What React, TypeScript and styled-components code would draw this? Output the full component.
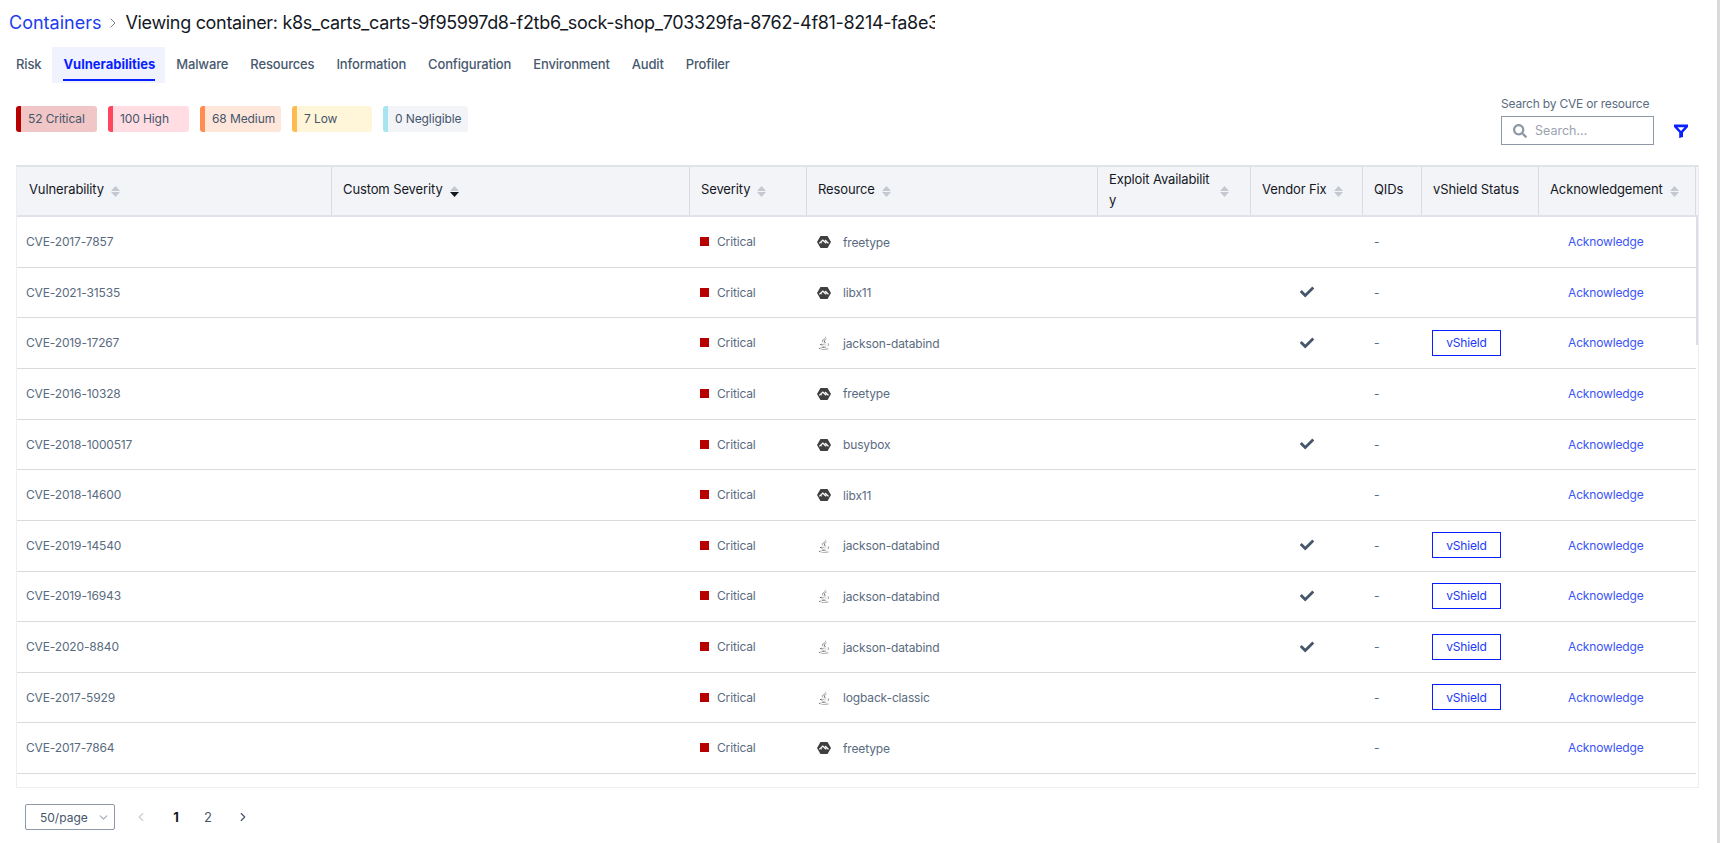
import React from "react";
import styled, { createGlobalStyle } from "styled-components";
import { SiAlpinelinux } from "react-icons/si";
import { FaJava, FaSearch, FaCheck } from "react-icons/fa";
import { LuChevronRight, LuChevronLeft, LuChevronDown } from "react-icons/lu";

const GlobalStyle = createGlobalStyle`
  html, body {
    margin: 0;
    height: 100%;
    overflow: hidden;
    background: #fff;
    font-family: Inter, "Noto Sans", sans-serif;
  }
`;

const COLUMNS = "315px 358px 117px 291px 153px 112px 59px 117px 157px";

type Row = {
  cve: string;
  resource: string;
  kind: "alpine" | "java";
  fix?: boolean;
  shield?: boolean;
};

const rows: Row[] = [
  { cve: "CVE-2017-7857", resource: "freetype", kind: "alpine" },
  { cve: "CVE-2021-31535", resource: "libx11", kind: "alpine", fix: true },
  { cve: "CVE-2019-17267", resource: "jackson-databind", kind: "java", fix: true, shield: true },
  { cve: "CVE-2016-10328", resource: "freetype", kind: "alpine" },
  { cve: "CVE-2018-1000517", resource: "busybox", kind: "alpine", fix: true },
  { cve: "CVE-2018-14600", resource: "libx11", kind: "alpine" },
  { cve: "CVE-2019-14540", resource: "jackson-databind", kind: "java", fix: true, shield: true },
  { cve: "CVE-2019-16943", resource: "jackson-databind", kind: "java", fix: true, shield: true },
  { cve: "CVE-2020-8840", resource: "jackson-databind", kind: "java", fix: true, shield: true },
  { cve: "CVE-2017-5929", resource: "logback-classic", kind: "java", shield: true },
  { cve: "CVE-2017-7864", resource: "freetype", kind: "alpine" },
];

const tabs = [
  "Risk",
  "Vulnerabilities",
  "Malware",
  "Resources",
  "Information",
  "Configuration",
  "Environment",
  "Audit",
  "Profiler",
];

const chips = [
  { label: "52 Critical", bar: "#b80000", bg: "#f0c6c6", width: 81 },
  { label: "100 High", bar: "#ff4560", bg: "#ffdde2", width: 81 },
  { label: "68 Medium", bar: "#ff8c50", bg: "#ffe6da", width: 81 },
  { label: "7 Low", bar: "#ffbb50", bg: "#fff5d8", width: 80 },
  { label: "0 Negligible", bar: "#a6e4f0", bg: "#f2f4f8", width: 85 },
];

const headers = [
  { label: "Vulnerability", sort: true },
  { label: "Custom Severity", sort: true, active: true },
  { label: "Severity", sort: true },
  { label: "Resource", sort: true },
  { label: "Exploit Availability", sort: true, wrap: true },
  { label: "Vendor Fix", sort: true },
  { label: "QIDs" },
  { label: "vShield Status" },
  { label: "Acknowledgement", sort: true },
];

const SortCaret: React.FC<{ active?: boolean }> = ({ active }) => (
  <CaretSvg width="9" height="11" viewBox="0 0 9 11">
    <path d="M4.5 0 L9 5 H0 Z" fill="#c4c8d0" />
    <path d="M0 6 H9 L4.5 11 Z" fill={active ? "#11181f" : "#c4c8d0"} />
  </CaretSvg>
);

const FilterIcon = () => (
  <svg width="14" height="14" viewBox="0 0 14 14">
    <path
      fillRule="evenodd"
      d="M0 0.5 H14 V3 L9 8.5 V13 L5.2 14 V8.5 L0 3 Z M3.5 3.2 H10.5 L7 7 Z"
      fill="#0a1fff"
    />
  </svg>
);

export default function App() {
  return (
    <Page>
      <GlobalStyle />
      <Breadcrumb>
        <Crumb>Containers</Crumb>
        <CrumbArrow>
          <LuChevronRight size={16} strokeWidth={1.3} />
        </CrumbArrow>
        <Title>
          Viewing container: k8s_carts_carts-9f95997d8-f2tb6_sock-shop_703329fa-8762-4f81-8214-fa8e3
        </Title>
      </Breadcrumb>

      <Tabs>
        {tabs.map((t) => (
          <Tab key={t} $active={t === "Vulnerabilities"}>
            {t}
          </Tab>
        ))}
      </Tabs>

      <Toolbar>
        <Chips>
          {chips.map((c) => (
            <Chip key={c.label} $bar={c.bar} $bg={c.bg} $width={c.width}>
              {c.label}
            </Chip>
          ))}
        </Chips>
        <SearchGroup>
          <SearchColumn>
            <SearchLabel>Search by CVE or resource</SearchLabel>
            <SearchBox>
              <FaSearch size={14} color="#8e99a8" />
              <SearchPlaceholder>Search...</SearchPlaceholder>
            </SearchBox>
          </SearchColumn>
          <FilterButton>
            <FilterIcon />
          </FilterButton>
        </SearchGroup>
      </Toolbar>

      <TableFrame>
        <HeaderRow>
          {headers.map((h) => (
            <HeaderCell key={h.label}>
              <HeaderLabel $wrap={h.wrap}>{h.label}</HeaderLabel>
              {h.sort && <SortCaret active={h.active} />}
            </HeaderCell>
          ))}
        </HeaderRow>
        <Body>
          {rows.map((r) => (
            <BodyRow key={r.cve}>
              <CveCell>{r.cve}</CveCell>
              <span />
              <SeverityCell>
                <SeveritySquare />
                Critical
              </SeverityCell>
              <ResourceCell>
                <ResourceIcon>
                  {r.kind === "alpine" ? (
                    <SiAlpinelinux size={14} color="#3f3f3f" />
                  ) : (
                    <FaJava size={14} color="#6e6e6e" />
                  )}
                </ResourceIcon>
                {r.resource}
              </ResourceCell>
              <span />
              <FixCell>{r.fix && <FaCheck size={14} color="#46566b" />}</FixCell>
              <QidCell>-</QidCell>
              <ShieldCell>{r.shield && <ShieldButton>vShield</ShieldButton>}</ShieldCell>
              <AckCell>Acknowledge</AckCell>
            </BodyRow>
          ))}
        </Body>
        <ScrollThumb />
      </TableFrame>

      <Pagination>
        <PageSelect>
          50/page
          <LuChevronDown size={13} color="#a4adb9" />
        </PageSelect>
        <PageArrow $muted>
          <LuChevronLeft size={14} strokeWidth={2} />
        </PageArrow>
        <PageNumber $active>1</PageNumber>
        <PageNumber>2</PageNumber>
        <PageArrow>
          <LuChevronRight size={14} strokeWidth={2} />
        </PageArrow>
      </Pagination>
      <PageScrollbar />
    </Page>
  );
}

const Page = styled.div`
  position: relative;
  width: 1720px;
  height: 843px;
  box-sizing: border-box;
  padding: 0 0 0 16px;
  overflow: hidden;
`;

const Breadcrumb = styled.div`
  display: flex;
  align-items: center;
  height: 45px;
  margin-left: -7px;
`;

const Crumb = styled.span`
  font-size: 18px;
  color: #1c3cf0;
`;

const CrumbArrow = styled.span`
  display: flex;
  width: 24px;
  justify-content: center;
  color: #5a6b80;
`;

const Title = styled.span`
  font-size: 18px;
  letter-spacing: -0.32px;
  color: #14181f;
  white-space: nowrap;
  overflow: hidden;
  width: 810px;
`;

const Tabs = styled.div`
  display: flex;
  height: 36px;
  margin-top: 2px;
`;

const Tab = styled.div<{ $active?: boolean }>`
  position: relative;
  display: flex;
  align-items: center;
  padding: ${(p) => (p.$active ? "0 10px 3px 11px" : "0 11px 3px")};
  font-size: 13px;
  letter-spacing: ${(p) => (p.$active ? "0" : "-0.15px")};
  font-weight: ${(p) => (p.$active ? 700 : 500)};
  color: ${(p) => (p.$active ? "#0a1fff" : "#48596e")};
  background: ${(p) => (p.$active ? "#f0f3fe" : "transparent")};

  &:first-child {
    padding-left: 0;
  }

  ${(p) =>
    p.$active &&
    `&::after {
      content: "";
      position: absolute;
      left: 11px;
      right: 10px;
      bottom: 2px;
      height: 2px;
      background: #0a1fff;
    }`}
`;

const Toolbar = styled.div`
  display: flex;
  justify-content: space-between;
  align-items: flex-start;
  height: 82px;
`;

const Chips = styled.div`
  display: flex;
  gap: 11px;
  margin-top: 23px;
`;

const Chip = styled.div<{ $bar: string; $bg: string; $width: number }>`
  box-sizing: border-box;
  width: ${(p) => p.$width}px;
  height: 26px;
  display: flex;
  align-items: center;
  padding: 0 0 2px 7px;
  font-size: 12px;
  letter-spacing: -0.1px;
  color: #46566b;
  white-space: nowrap;
  background: ${(p) => p.$bg};
  border-left: 5px solid ${(p) => p.$bar};
  border-radius: 3px;
`;

const SearchGroup = styled.div`
  display: flex;
  align-items: flex-end;
  margin-right: 32px;
  margin-top: 13px;
`;

const SearchColumn = styled.div`
  display: flex;
  flex-direction: column;
  gap: 5px;
`;

const SearchLabel = styled.div`
  font-size: 12px;
  line-height: 15px;
  letter-spacing: -0.2px;
  color: #5a6b80;
`;

const SearchBox = styled.div`
  box-sizing: border-box;
  width: 153px;
  height: 29px;
  display: flex;
  align-items: center;
  gap: 8px;
  padding-left: 11px;
  border: 1px solid #8e99a8;
`;

const SearchPlaceholder = styled.span`
  font-size: 12.5px;
  color: #9aa3af;
`;

const FilterButton = styled.div`
  display: flex;
  margin-left: 20px;
  margin-bottom: 7px;
`;

const TableFrame = styled.div`
  position: relative;
  box-sizing: border-box;
  width: 1683px;
  height: 623px;
  border: 1px solid #eceef4;
  border-top: 2px solid #dfe2e9;
  overflow: hidden;
`;

const HeaderRow = styled.div`
  display: grid;
  grid-template-columns: ${COLUMNS};
  height: 50.2px;
  box-sizing: border-box;
  background: #f3f4f8;
  border-bottom: 2px solid #dfe2e9;
`;

const HeaderCell = styled.div`
  display: flex;
  align-items: center;
  gap: 7px;
  padding: 0 11px;
  border-right: 1px solid #d9dbe0;
  box-sizing: border-box;
  min-width: 0;

  &:first-child {
    padding-left: 12px;
  }
`;

const CaretSvg = styled.svg`
  flex-shrink: 0;
`;

const HeaderLabel = styled.span<{ $wrap?: boolean }>`
  font-size: 13px;
  line-height: 21px;
  letter-spacing: -0.12px;
  padding-bottom: 3px;
  color: #14181f;
  white-space: ${(p) => (p.$wrap ? "normal" : "nowrap")};
  word-break: ${(p) => (p.$wrap ? "break-all" : "normal")};
  width: ${(p) => (p.$wrap ? "104px" : "auto")};
  flex-shrink: 0;
`;

const Body = styled.div`
  display: flex;
  flex-direction: column;
`;

const BodyRow = styled.div`
  display: grid;
  grid-template-columns: ${COLUMNS};
  width: 1679px;
  height: 50.64px;
  box-sizing: border-box;
  padding-bottom: 1px;
  border-bottom: 1px solid #dadbdd;
  align-items: center;
  font-size: 12px;
  letter-spacing: -0.15px;
  color: #5a6b80;
`;

const CveCell = styled.div`
  padding-left: 9px;
`;

const SeverityCell = styled.div`
  display: flex;
  align-items: center;
  gap: 8px;
  padding-left: 10px;
`;

const SeveritySquare = styled.i`
  width: 9px;
  height: 9px;
  background: #b80000;
`;

const ResourceCell = styled.div`
  display: flex;
  align-items: center;
  padding: 1px 0 0 10px;
`;

const ResourceIcon = styled.span`
  display: flex;
  width: 26px;
`;

const FixCell = styled.div`
  display: flex;
  justify-content: center;
`;

const QidCell = styled.div`
  padding-left: 11px;
`;

const ShieldCell = styled.div`
  padding-left: 10px;
`;

const ShieldButton = styled.div`
  box-sizing: border-box;
  width: 69px;
  height: 26px;
  display: flex;
  align-items: center;
  justify-content: center;
  border: 1px solid #0a1fff;
  color: #2038f5;
`;

const AckCell = styled.div`
  padding-left: 29px;
  color: #3c55f5;
`;

const ScrollThumb = styled.div`
  position: absolute;
  top: 50px;
  right: 0;
  width: 2px;
  height: 128px;
  background: #dcdee4;
`;

const Pagination = styled.div`
  display: flex;
  align-items: center;
  height: 26px;
  margin: 16px 0 0 9px;
`;

const PageSelect = styled.div`
  box-sizing: border-box;
  width: 90px;
  height: 26px;
  display: flex;
  align-items: center;
  justify-content: space-between;
  padding: 0 4px 0 14px;
  border: 1px solid #8e99a8;
  border-radius: 2px;
  font-size: 12px;
  color: #46566b;
  margin-right: 7px;
`;

const PageArrow = styled.div<{ $muted?: boolean }>`
  display: flex;
  justify-content: center;
  width: 32px;
  margin: 0 3px;
  color: ${(p) => (p.$muted ? "#c9ced6" : "#46566b")};
`;

const PageNumber = styled.div<{ $active?: boolean }>`
  width: 32px;
  text-align: center;
  font-size: 13px;
  font-weight: ${(p) => (p.$active ? 700 : 400)};
  color: ${(p) => (p.$active ? "#14181f" : "#46566b")};
`;

const PageScrollbar = styled.div`
  position: absolute;
  top: 0;
  right: 0;
  width: 3px;
  height: 100%;
  background: #d9d9d9;
`;
